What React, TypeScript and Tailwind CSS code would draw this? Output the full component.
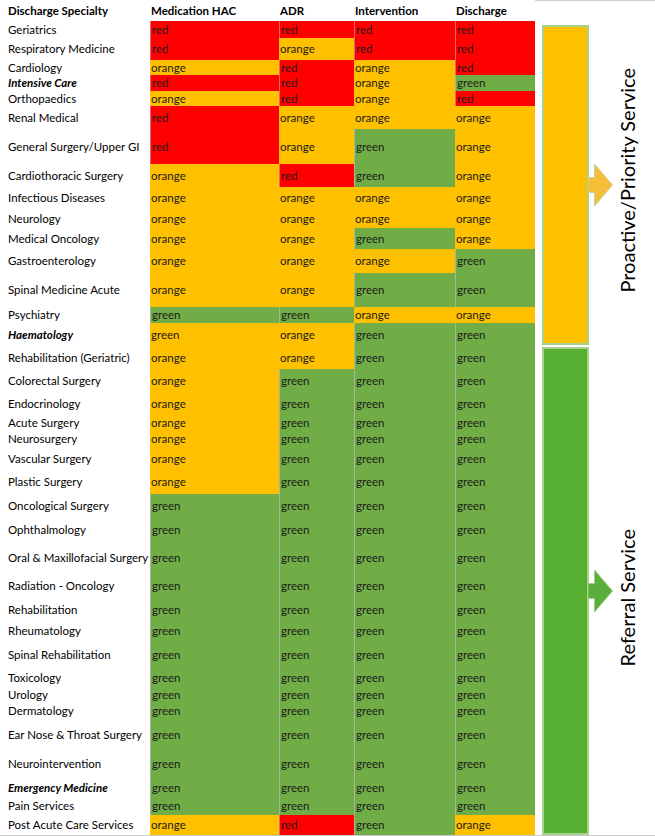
import React from 'react'

type C = 'r' | 'o' | 'g'

const rows: [string, boolean, string, C, C, C, C, string?][] = [
  ['Geriatrics', false, 'h-[17px]', 'r', 'r', 'r', 'r'],
  ['Respiratory Medicine', false, 'h-[22px]', 'r', 'o', 'r', 'r'],
  ['Cardiology', false, 'h-[15px]', 'o', 'r', 'o', 'r'],
  ['Intensive Care', true, 'h-[16px]', 'r', 'r', 'o', 'g'],
  ['Orthopaedics', false, 'h-[15px]', 'o', 'r', 'o', 'r'],
  ['Renal Medical', false, 'h-[23px]', 'r', 'o', 'o', 'o'],
  ['General Surgery/Upper GI', false, 'h-[35px]', 'r', 'o', 'g', 'o'],
  ['Cardiothoracic Surgery', false, 'h-[23px]', 'o', 'r', 'g', 'o'],
  ['Infectious Diseases', false, 'h-[22px]', 'o', 'o', 'o', 'o'],
  ['Neurology', false, 'h-[19px]', 'o', 'o', 'o', 'o'],
  ['Medical Oncology', false, 'h-[21px]', 'o', 'o', 'g', 'o'],
  ['Gastroenterology', false, 'h-[24px]', 'o', 'o', 'o', 'g'],
  ['Spinal Medicine Acute', false, 'h-[34px]', 'o', 'o', 'g', 'g'],
  ['Psychiatry', false, 'h-[16px]', 'g', 'g', 'o', 'o'],
  ['Haematology', true, 'h-[23px]', 'o', 'o', 'g', 'g', 'green'],
  ['Rehabilitation (Geriatric)', false, 'h-[23px]', 'o', 'o', 'g', 'g'],
  ['Colorectal Surgery', false, 'h-[24px]', 'o', 'g', 'g', 'g'],
  ['Endocrinology', false, 'h-[22px]', 'o', 'g', 'g', 'g'],
  ['Acute Surgery', false, 'h-[16px]', 'o', 'g', 'g', 'g'],
  ['Neurosurgery', false, 'h-[16px]', 'o', 'g', 'g', 'g'],
  ['Vascular Surgery', false, 'h-[23px]', 'o', 'g', 'g', 'g'],
  ['Plastic Surgery', false, 'h-[24px]', 'o', 'g', 'g', 'g'],
  ['Oncological Surgery', false, 'h-[23px]', 'g', 'g', 'g', 'g'],
  ['Ophthalmology', false, 'h-[26px]', 'g', 'g', 'g', 'g'],
  ['Oral & Maxillofacial Surgery', false, 'h-[30px]', 'g', 'g', 'g', 'g'],
  ['Radiation - Oncology', false, 'h-[26px]', 'g', 'g', 'g', 'g'],
  ['Rehabilitation', false, 'h-[21px]', 'g', 'g', 'g', 'g'],
  ['Rheumatology', false, 'h-[22px]', 'g', 'g', 'g', 'g'],
  ['Spinal Rehabilitation', false, 'h-[26px]', 'g', 'g', 'g', 'g'],
  ['Toxicology', false, 'h-[19px]', 'g', 'g', 'g', 'g'],
  ['Urology', false, 'h-[15px]', 'g', 'g', 'g', 'g'],
  ['Dermatology', false, 'h-[18px]', 'g', 'g', 'g', 'g'],
  ['Ear Nose & Throat Surgery', false, 'h-[30px]', 'g', 'g', 'g', 'g'],
  ['Neurointervention', false, 'h-[28px]', 'g', 'g', 'g', 'g'],
  ['Emergency Medicine', true, 'h-[19px]', 'g', 'g', 'g', 'g'],
  ['Pain Services', false, 'h-[18px]', 'g', 'g', 'g', 'g'],
  ['Post Acute Care Services', false, 'h-[20px]', 'o', 'r', 'g', 'o'],
]

const cellBg: Record<C, string> = {
  r: 'bg-[#ff0000] border-l border-[#e46a6a]',
  o: 'bg-[#ffc000]',
  g: 'bg-[#70ad47] border-l border-[#a3b99a]',
}
const word: Record<C, string> = { r: 'red', o: 'orange', g: 'green' }

const widths = ['w-[129px]', 'w-[75px]', 'w-[101px]', 'w-[80px]']

function Cell({ c, w, text }: { c: C; w: string; text?: string }) {
  return (
    <div className={`${w} ${cellBg[c]} h-full flex items-center pl-px text-[#1b1b1b]`}>
      {text ?? word[c]}
    </div>
  )
}

function Arrow({ fill, stroke }: { fill: string; stroke: string }) {
  return (
    <svg width="26" height="44" viewBox="0 0 26 44" className="-ml-px shrink-0">
      <path d="M0 14.5 H6.5 V1 L24.5 22 L6.5 43 V29.5 H0 Z" fill={fill} stroke={stroke} strokeWidth="1" />
    </svg>
  )
}

export default function App() {
  return (
    <div className="w-[655px] h-[836px] bg-white flex border-b border-[#c9c9c9] font-['Lato','Open_Sans',sans-serif] text-[11.5px] text-black overflow-hidden">
      {/* table */}
      <div className="w-[535px] flex flex-col">
        <div className="h-[21px] flex items-center font-bold pt-px">
          <div className="w-[150px] pl-[8px]">Discharge Specialty</div>
          <div className="w-[129px] pl-px">Medication HAC</div>
          <div className="w-[75px] pl-px">ADR</div>
          <div className="w-[101px] pl-px">Intervention</div>
          <div className="w-[80px] pl-px">Discharge</div>
        </div>
        {rows.map(([label, bi, h, a, b, c, d, t]) => (
          <div key={label} className={`${h} flex items-center`}>
            <div className={`w-[150px] pl-[8px] whitespace-nowrap ${bi ? 'font-bold italic' : ''}`}>{label}</div>
            <Cell c={a} w={widths[0]} text={t} />
            <Cell c={b} w={widths[1]} />
            <Cell c={c} w={widths[2]} />
            <Cell c={d} w={widths[3]} />
          </div>
        ))}
      </div>

      {/* service bands */}
      <div className="flex-1 flex flex-col pl-[7px] pt-[24px] gap-[2px] border-t border-[#d0d0d0]">
        <div className="h-[320px] flex items-center">
          <div className="w-[47px] h-full bg-[#ffc000] border-2 border-[#a9d18e]" />
          <Arrow fill="#f4be38" stroke="#c9d49a" />
          <div className="w-[26px] h-full flex items-center justify-center">
            <span className="[writing-mode:vertical-rl] rotate-180 whitespace-nowrap text-[20px] -translate-y-[5px]">Proactive/Priority Service</span>
          </div>
        </div>
        <div className="h-[489px] flex items-center">
          <div className="w-[47px] h-full bg-[#56af31] border-2 border-[#a9d18e]" />
          <Arrow fill="#5aae3a" stroke="#a2cf84" />
          <div className="w-[26px] h-full flex items-center justify-center">
            <span className="[writing-mode:vertical-rl] rotate-180 whitespace-nowrap text-[20px] translate-y-[7px]">Referral Service</span>
          </div>
        </div>
      </div>
    </div>
  )
}
